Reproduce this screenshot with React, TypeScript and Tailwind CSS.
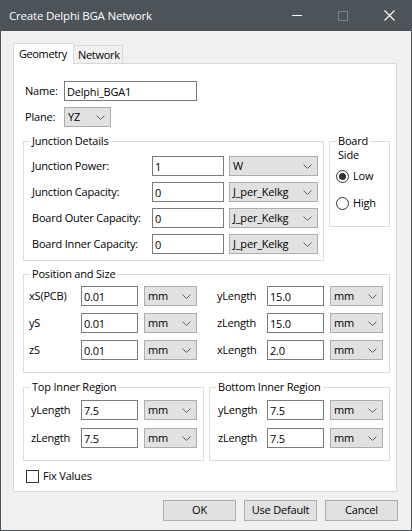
import * as React from 'react';

// --- small pieces of the WinForms look ---

const Chevron = () => (
    <svg width="9" height="5" viewBox="0 0 9 5" className="shrink-0">
        <path d="M0.5 0.5 L4.5 4.5 L8.5 0.5" fill="none" stroke="#5f5f5f" strokeWidth="1" />
    </svg>
);

function TextBox({ value, w }: { value: string; w: string }) {
    return (
        <input
            readOnly
            value={value}
            className={`${w} h-[20px] shrink-0 border border-[#7a7a7a] bg-white px-[2px] text-[11px] leading-[18px] tracking-[-0.2px] text-black outline-none`}
        />
    );
}

function Combo({ value, w, ml = '' }: { value: string; w: string; ml?: string }) {
    return (
        <div className={`${w} ${ml} flex h-[20px] shrink-0 items-center justify-between border border-[#adadad] bg-[#e1e1e1] pl-[3px] pr-[5px] leading-[18px]`}>
            <span>{value}</span>
            <Chevron />
        </div>
    );
}

function Group({ title, className, children }: { title: React.ReactNode; className: string; children: React.ReactNode }) {
    return (
        <div className={`border border-[#dcdcdc] ${className}`}>
            <div className="-mt-[9px] ml-[6px] w-fit bg-white px-[2px] leading-[16px]">{title}</div>
            {children}
        </div>
    );
}

function Radio({ label, checked }: { label: string; checked?: boolean }) {
    return (
        <div className="flex h-[16px] items-center gap-[4px]">
            <div className="flex h-[13px] w-[13px] items-center justify-center rounded-full border border-[#333333] bg-white">
                {checked && <div className="h-[7px] w-[7px] rounded-full bg-[#333333]" />}
            </div>
            <span>{label}</span>
        </div>
    );
}

function Button({ label }: { label: string }) {
    return (
        <div className="flex h-[21px] w-[73px] items-center justify-center border border-[#adadad] bg-[#e1e1e1]">
            {label}
        </div>
    );
}

export default function App() {
    const junction = [
        { label: 'Junction Power:', value: '1', unit: 'W' },
        { label: 'Junction Capacity:', value: '0', unit: 'J_per_Kelkg' },
        { label: 'Board Outer Capacity:', value: '0', unit: 'J_per_Kelkg' },
        { label: 'Board Inner Capacity:', value: '0', unit: 'J_per_Kelkg' },
    ];
    const pos = [
        { a: 'xS(PCB)', av: '0.01', b: 'yLength', bv: '15.0' },
        { a: 'yS', av: '0.01', b: 'zLength', bv: '15.0' },
        { a: 'zS', av: '0.01', b: 'xLength', bv: '2.0' },
    ];

    return (
        <div className="flex h-[531px] w-[412px] flex-col font-['Open_Sans',sans-serif] text-[11px] tracking-[-0.2px] text-black">
            {/* --- Title bar --- */}
            <div className="flex h-[31px] shrink-0 items-center bg-[#4c5359] pl-[9px] text-[11.5px] text-white">
                <span>Create Delphi BGA Network</span>
                <div className="ml-auto flex h-full">
                    <div className="flex w-[46px] items-center justify-center">
                        <div className="h-px w-[10px] bg-white" />
                    </div>
                    <div className="flex w-[46px] items-center justify-center">
                        <div className="h-[10px] w-[10px] border border-[#7d8489]" />
                    </div>
                    <div className="flex w-[46px] items-center justify-center">
                        <svg width="11" height="11" viewBox="0 0 11 11">
                            <path d="M0.5 0.5 L10.5 10.5 M10.5 0.5 L0.5 10.5" stroke="#ffffff" strokeWidth="1.1" />
                        </svg>
                    </div>
                </div>
            </div>

            {/* --- Dialog body --- */}
            <div className="flex flex-1 flex-col border-x border-b border-[#4c5359] bg-[#f0f0f0] pl-[12px] pt-[12px]">
                {/* tabs */}
                <div className="flex items-end">
                    <div className="relative z-10 -mb-px h-[21px] w-[61px] border border-b-0 border-[#d9d9d9] bg-white pl-[5px] pt-[2px] leading-[16px] tracking-[-0.4px]">
                        Geometry
                    </div>
                    <div className="h-[18px] w-[49px] border-r border-t border-[#d9d9d9] pl-[4px] pt-px leading-[16px] tracking-[-0.3px]">
                        Network
                    </div>
                </div>

                {/* tab page */}
                <div className="flex h-[429px] w-[384px] flex-col border border-[#d9d9d9] bg-white">
                    <div className="ml-[11px] mt-[17px] flex items-center">
                        <span className="w-[39px]">Name:</span>
                        <TextBox value="Delphi_BGA1" w="w-[133px]" />
                    </div>
                    <div className="ml-[11px] mt-[6px] flex items-center">
                        <span className="w-[39px]">Plane:</span>
                        <Combo value="YZ" w="w-[47px]" />
                    </div>

                    <div className="ml-[9px] mt-[14px] flex items-start">
                        <Group title="Junction Details" className="w-[301px] pb-[6px]">
                            {junction.map((r, i) => (
                                <div key={r.label} className={`flex items-center pl-[8px] ${i === 0 ? 'mt-[7px]' : 'mt-[6px]'}`}>
                                    <span className="w-[120px]">{r.label}</span>
                                    <TextBox value={r.value} w="w-[72px]" />
                                    <Combo value={r.unit} w="w-[89px]" ml="ml-[5px]" />
                                </div>
                            ))}
                        </Group>
                        <div className="ml-[5px] w-[61px] border border-[#dcdcdc] pb-[15px]">
                            <div className="-mt-[8px] ml-[6px] w-fit bg-white px-[2px] leading-[14px]">
                                Board
                                <br />
                                Side
                            </div>
                            <div className="mt-[6px] pl-[6px]">
                                <Radio label="Low" checked />
                            </div>
                            <div className="mt-[11px] pl-[6px]">
                                <Radio label="High" />
                            </div>
                        </div>
                    </div>

                    <Group title="Position and Size" className="ml-[9px] mt-[13px] w-[367px] pb-[12px]">
                        {pos.map((r, i) => (
                            <div key={r.a} className={`flex items-center pl-[5px] ${i === 0 ? 'mt-[4px]' : 'mt-[7px]'}`}>
                                <span className="w-[52px]">{r.a}</span>
                                <TextBox value={r.av} w="w-[57px]" />
                                <Combo value="mm" w="w-[53px]" ml="ml-[6px]" />
                                <span className="ml-[20px] w-[50px]">{r.b}</span>
                                <TextBox value={r.bv} w="w-[57px]" />
                                <Combo value="mm" w="w-[53px]" ml="ml-[6px]" />
                            </div>
                        ))}
                    </Group>

                    <div className="ml-[9px] mt-[14px] flex">
                        <Group title="Top Inner Region" className="w-[181px] pb-[12px]">
                            {['yLength', 'zLength'].map((l, i) => (
                                <div key={l} className={`flex items-center pl-[7px] ${i === 0 ? 'mt-[5px]' : 'mt-[8px]'}`}>
                                    <span className="w-[50px]">{l}</span>
                                    <TextBox value="7.5" w="w-[57px]" />
                                    <Combo value="mm" w="w-[53px]" ml="ml-[6px]" />
                                </div>
                            ))}
                        </Group>
                        <Group title="Bottom Inner Region" className="ml-[5px] w-[181px] pb-[12px]">
                            {['yLength', 'zLength'].map((l, i) => (
                                <div key={l} className={`flex items-center pl-[8px] ${i === 0 ? 'mt-[5px]' : 'mt-[8px]'}`}>
                                    <span className="w-[49px]">{l}</span>
                                    <TextBox value="7.5" w="w-[57px]" />
                                    <Combo value="mm" w="w-[53px]" ml="ml-[6px]" />
                                </div>
                            ))}
                        </Group>
                    </div>

                    <div className="ml-[12px] mt-[7px] flex h-[16px] items-center gap-[4px]">
                        <div className="h-[13px] w-[13px] border border-[#333333] bg-white" />
                        <span>Fix Values</span>
                    </div>
                </div>

                {/* buttons */}
                <div className="mt-[8px] flex justify-end gap-[8px] pr-[13px]">
                    <Button label="OK" />
                    <Button label="Use Default" />
                    <Button label="Cancel" />
                </div>
            </div>
        </div>
    );
}
